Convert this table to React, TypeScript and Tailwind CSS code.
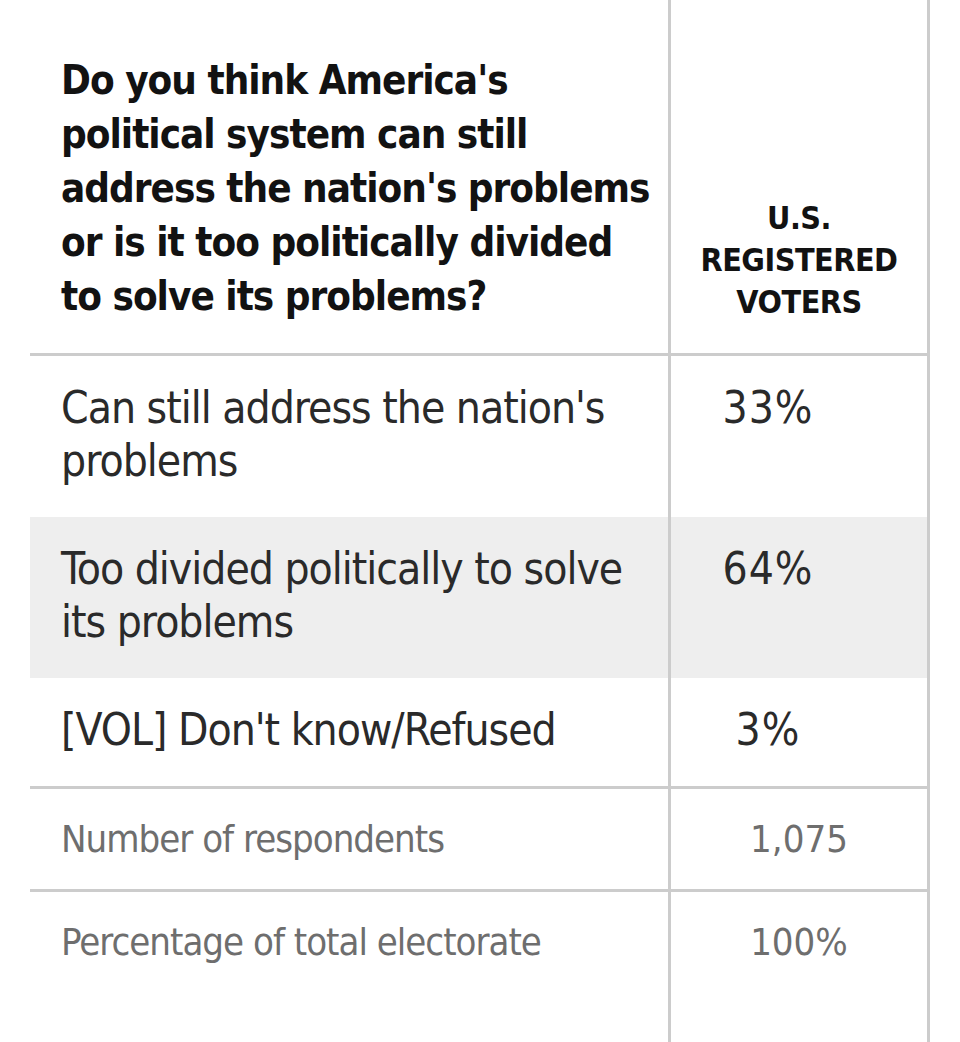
const narrow = "font-['DejaVu_Sans_Condensed','Liberation_Sans',sans-serif]";

type Row = { label: string; value: string; shade?: boolean; last?: boolean };

const answers: Row[] = [
  { label: "Can still address the nation's problems", value: "33%" },
  { label: "Too divided politically to solve its problems", value: "64%", shade: true },
  { label: "[VOL] Don't know/Refused", value: "3%" },
];

const footer: Row[] = [
  { label: "Number of respondents", value: "1,075" },
  { label: "Percentage of total electorate", value: "100%", last: true },
];

const question = [
  "Do you think America's",
  "political system can still",
  "address the nation's problems",
  "or is it too politically divided",
  "to solve its problems?",
];

export default function App() {
  return (
    <div className={`${narrow} bg-white h-[1042px] overflow-hidden pl-[30px]`}>
      <div className="w-[900px] h-full flex flex-col">
        {/* header */}
        <div className="flex h-[356px] border-b-[3px] border-[#cccccc]">
          <div className="w-[638px] flex items-end pl-[31px] pb-[30px]">
            <h1 className="text-[40px] leading-[54px] font-bold tracking-[-1px] text-[#121212] whitespace-nowrap">
              {question.map((l) => (
                <span key={l} className="block">
                  {l}
                </span>
              ))}
            </h1>
          </div>
          <div className="w-[262px] border-x-[3px] border-[#cccccc] flex items-end justify-center pb-[30px]">
            <div className="text-center text-[32px] leading-[42px] font-bold tracking-[-0.5px] text-[#121212] uppercase">
              U.S.
              <br />
              Registered
              <br />
              Voters
            </div>
          </div>
        </div>

        {answers.map((r, i) => (
          <div
            key={r.label}
            className={`flex ${r.shade ? "bg-[#eeeeee]" : ""} ${i === answers.length - 1 ? "border-b-[3px] border-[#cccccc]" : ""}`}
          >
            <div className="w-[638px] pl-[31px] pr-5 pt-[25px] pb-[30px] text-[44px] leading-[53px] tracking-[-1px] text-[#2a2a2a]">
              {r.label}
            </div>
            <div className="w-[262px] border-x-[3px] border-[#cccccc] pt-[25px] pr-[62px] text-center text-[44px] leading-[53px] tracking-[1px] text-[#2a2a2a]">
              {r.value}
            </div>
          </div>
        ))}

        {footer.map((r) => (
          <div
            key={r.label}
            className={`flex ${r.last ? "flex-1" : "h-[103px] border-b-[3px] border-[#cccccc]"}`}
          >
            <div className="w-[638px] pl-[31px] pt-[26px] text-[38px] leading-[48px] tracking-[-1px] text-[#6e6e6e]">
              {r.label}
            </div>
            <div className="w-[262px] border-x-[3px] border-[#cccccc] pt-[26px] text-center text-[38px] leading-[48px] text-[#6e6e6e]">
              {r.value}
            </div>
          </div>
        ))}
      </div>
    </div>
  );
}
